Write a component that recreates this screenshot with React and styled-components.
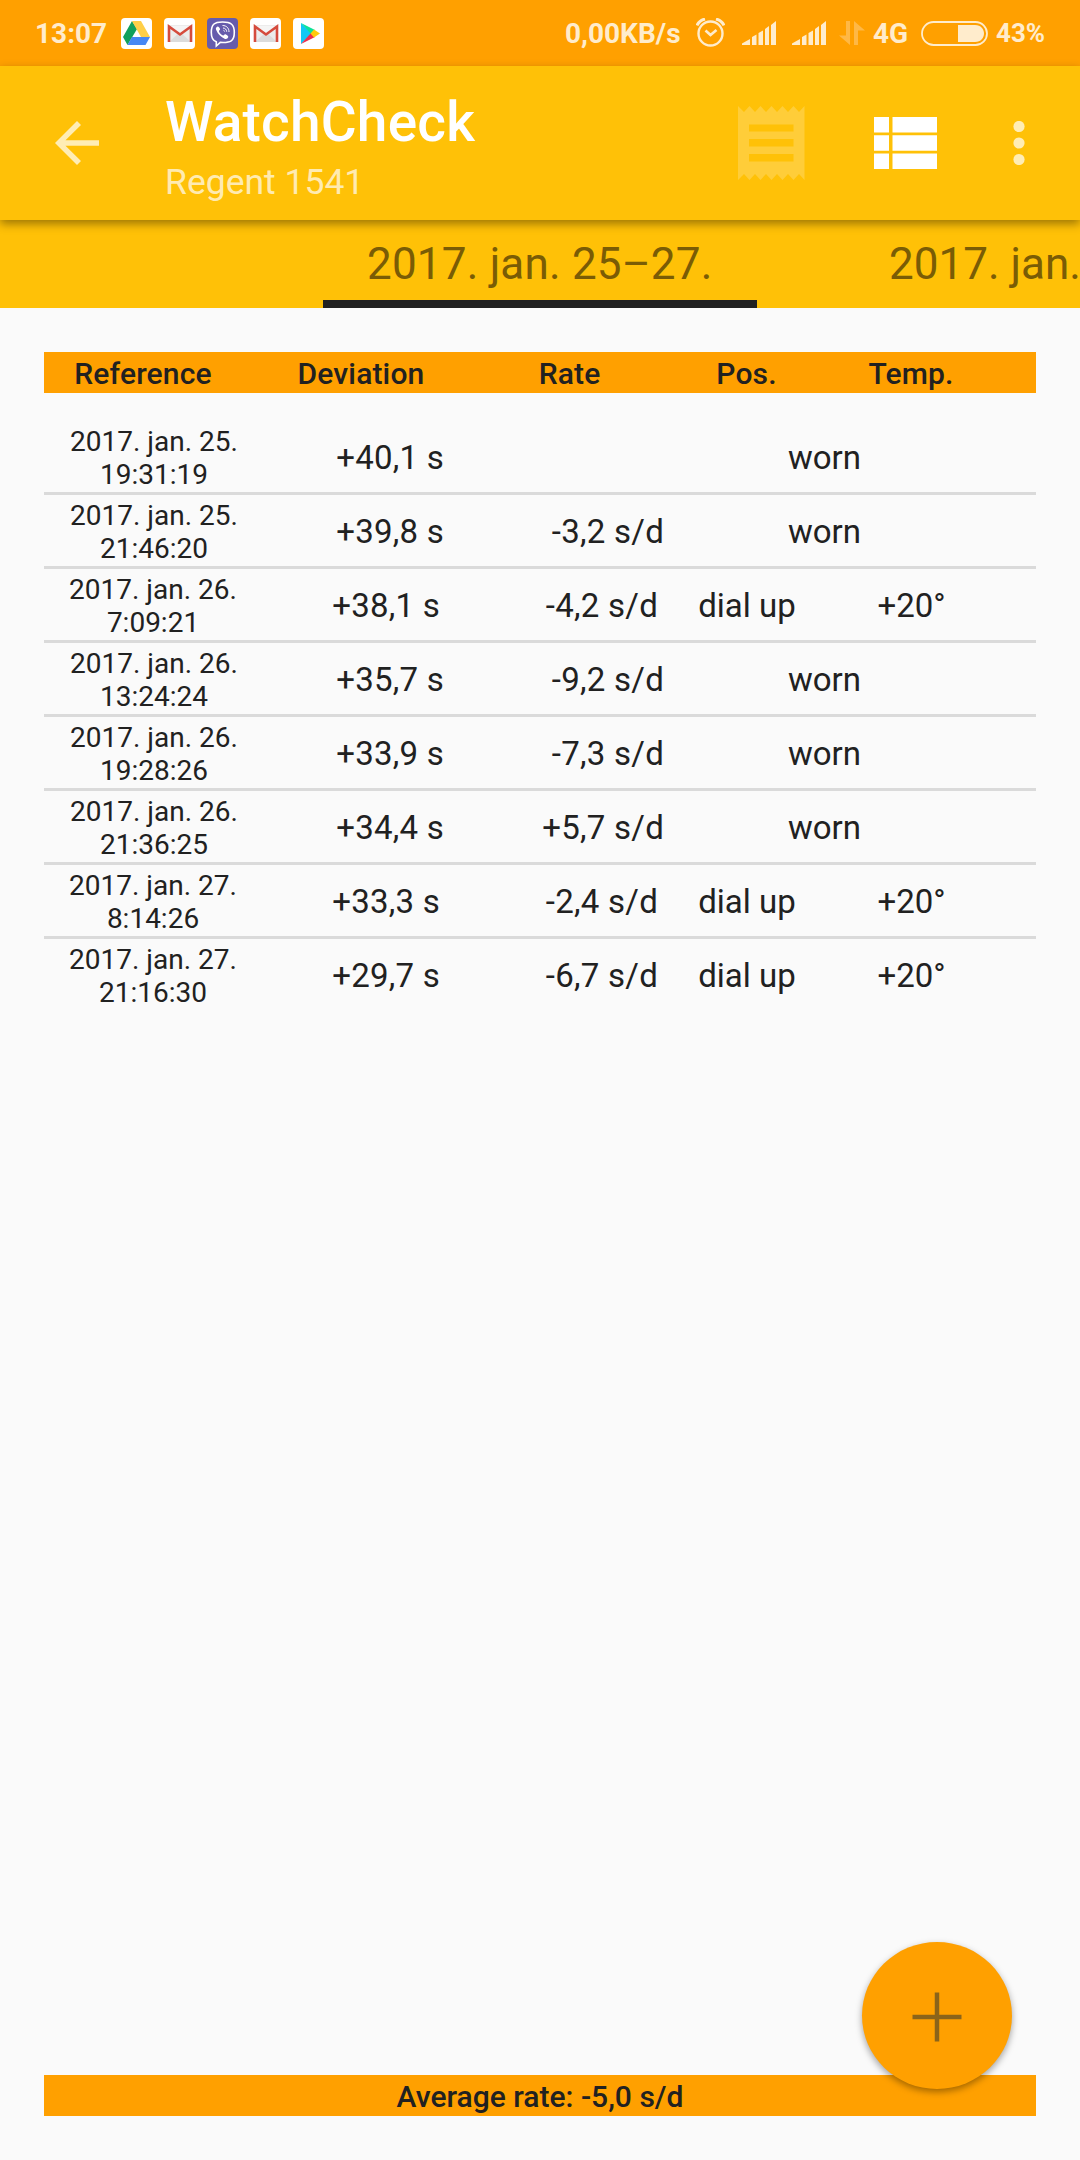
import React from "react"
import styled, { createGlobalStyle } from "styled-components"

const GlobalStyle = createGlobalStyle`
    * {
        box-sizing: border-box;
    }

    body {
        margin: 0;
        background: #fafafa;
        color: #212121;
        font-family: Roboto, "Noto Sans", sans-serif;
    }

    svg {
        display: block;
        flex: none;
    }
`

const Screen = styled.div`
    position: relative;
    display: flex;
    flex-direction: column;
    width: 1080px;
    height: 2160px;
    overflow: hidden;
`

const StatusBar = styled.header`
    display: flex;
    align-items: center;
    justify-content: space-between;
    height: 66px;
    padding: 0 35px;
    background: #ffa000;
    color: #ffeccc;
`

const StatusGroup = styled.div`
    display: flex;
    align-items: center;
`

const StatusText = styled.span`
    width: ${({ $width }) => $width}px;
    margin-right: ${({ $gap = 0 }) => $gap}px;
    padding-top: 1px;
    font-size: ${({ $size = 28 }) => $size}px;
    line-height: 33px;
    font-weight: ${({ $weight = 700 }) => $weight};
    white-space: nowrap;
`

const AppIcon = styled.svg`
    width: 31px;
    height: 31px;
    margin-right: 12px;
    border-radius: 4px;
    background: ${({ $bg = "#fff" }) => $bg};
`

const StatusIcon = styled.svg`
    margin-right: ${({ $gap }) => $gap}px;
`

const Toolbar = styled.div`
    position: relative;
    z-index: 1;
    display: flex;
    align-items: center;
    height: 154px;
    padding-left: 55px;
    background: #ffc107;
    color: #fff;
    box-shadow: 0 4px 9px rgba(0, 0, 0, 0.38);
`

const Titles = styled.div`
    flex: 1;
    padding: 14px 0 0 66px;
`

const Title = styled.h1`
    margin: 0;
    font-size: 55px;
    font-weight: 500;
    line-height: 64px;
    letter-spacing: 0.2px;
`

const Subtitle = styled.p`
    margin: 0;
    color: rgba(255, 255, 255, 0.7);
    font-size: 35.500px;
    line-height: 56px;
`

const Tabs = styled.nav`
    display: flex;
    height: 88px;
    padding-left: 323px;
    overflow: hidden;
    background: #ffc107;
`

const Tab = styled.div`
    flex: none;
    width: 434px;
    padding: 18px 0 0 ${({ $inset }) => $inset}px;
    border-bottom: 8px solid ${({ $active }) => ($active ? "#212121" : "transparent")};
    color: #7a5c05;
    font-size: 44px;
    line-height: 52px;
    letter-spacing: ${({ $active }) => ($active ? 0.2 : 0)}px;
    white-space: nowrap;
`

const Content = styled.main`
    display: flex;
    flex: 1;
    flex-direction: column;
    padding: 44px;
`

const HeaderRow = styled.div`
    display: grid;
    grid-template-columns: 198px 238px 179px 175px 154px;
    height: 41px;
    margin-bottom: 28px;
    background: #ffa000;
    font-size: 30px;
    font-weight: 500;
    line-height: 43px;
    letter-spacing: 0.15px;
    text-align: center;
`

const Row = styled.div`
    display: grid;
    grid-template-columns: ${({ $worn }) =>
        $worn ? "220px 180px 220px 321px" : "218px 178px 218px 178px 151px"};
    align-items: center;
    height: 74px;
    border-bottom: 3px solid #dadada;
    font-size: 33px;

    &:last-child {
        border-bottom-color: transparent;
    }
`

const Reference = styled.div`
    padding-top: 3px;
    font-size: 28px;
    line-height: 33px;
    text-align: center;
`

const Value = styled.div`
    padding-top: 1px;
    letter-spacing: ${({ $align }) => ($align ? 0 : 0.25)}px;
    text-align: ${({ $align = "right" }) => $align};
    white-space: nowrap;
`

const Average = styled.footer`
    height: 41px;
    margin-top: auto;
    background: #ffa000;
    font-size: 30px;
    font-weight: 500;
    line-height: 43px;
    text-align: center;
`

const AddButton = styled.button`
    position: absolute;
    right: 68px;
    bottom: 71px;
    display: flex;
    align-items: center;
    justify-content: center;
    width: 150px;
    height: 147px;
    padding: 3px 0 0;
    border: 0;
    border-radius: 50%;
    background: #ffa000;
    box-shadow: 0 3px 7px rgba(0, 0, 0, 0.36);
`

const measurements = [
    { date: "2017. jan. 25.", time: "19:31:19", deviation: "+40,1 s", rate: "", pos: "worn" },
    { date: "2017. jan. 25.", time: "21:46:20", deviation: "+39,8 s", rate: "-3,2 s/d", pos: "worn" },
    { date: "2017. jan. 26.", time: "7:09:21", deviation: "+38,1 s", rate: "-4,2 s/d", pos: "dial up", temp: "+20°" },
    { date: "2017. jan. 26.", time: "13:24:24", deviation: "+35,7 s", rate: "-9,2 s/d", pos: "worn" },
    { date: "2017. jan. 26.", time: "19:28:26", deviation: "+33,9 s", rate: "-7,3 s/d", pos: "worn" },
    { date: "2017. jan. 26.", time: "21:36:25", deviation: "+34,4 s", rate: "+5,7 s/d", pos: "worn" },
    { date: "2017. jan. 27.", time: "8:14:26", deviation: "+33,3 s", rate: "-2,4 s/d", pos: "dial up", temp: "+20°" },
    { date: "2017. jan. 27.", time: "21:16:30", deviation: "+29,7 s", rate: "-6,7 s/d", pos: "dial up", temp: "+20°" },
]

function DriveIcon() {
    return (
        <AppIcon viewBox="0 0 31 31">
            <path d="M11 3 2 19l4.500 8L16 11z" fill="#11a05d" />
            <path d="M11 3h9l9 16h-9z" fill="#ffcf48" />
            <path d="M11 19h18l-4.500 8h-18z" fill="#4687f4" />
        </AppIcon>
    )
}

function GmailIcon() {
    return (
        <AppIcon viewBox="0 0 31 31">
            <path d="M5 7h22v17H5z" fill="#ececec" />
            <path d="M5 24 16 14l11 10z" fill="#dcdcdc" />
            <path d="m6 8 10 8 10-8z" fill="#f5f5f5" />
            <path d="M5 24V8.500l11 8 11-8V24" fill="none" stroke="#d54b3d" strokeWidth="2.600" />
        </AppIcon>
    )
}

function ViberIcon() {
    return (
        <AppIcon viewBox="0 0 31 31" $bg="#665cac">
            <path
                d="M15.500 4C7 4 4.300 6.500 4.300 14.500c0 5 1.200 8 5 9.300V28l4-3.600c10.500.600 14-1.400 14-9.900C27.300 6.500 24 4 15.500 4z"
                fill="none"
                stroke="#fff"
                strokeWidth="1.600"
            />
            <path
                d="M10.500 8.500c-1.600 1-2 2-1.300 3.600 1.800 4.300 4.500 7 8.800 8.800 1.500.500 2.600-.200 3.300-1.800.300-.9-2.300-2.900-3.300-2.800-.9.200-1 1.400-2 1.100-2-.8-3.400-2.300-4-4-.3-1.100 1.100-1.200 1.100-2.200 0-.8-1.700-3-2.600-2.700z"
                fill="#fff"
            />
            <path d="M15.500 7.500c4 0 6.500 2.500 6.500 6.500M16 10c2.300.200 3.500 1.500 3.700 3.700M16.500 12.300c.8.200 1 .6 1.100 1.200" fill="none" stroke="#fff" strokeWidth="1" />
        </AppIcon>
    )
}

function PlayIcon() {
    return (
        <AppIcon viewBox="0 0 31 31">
            <path d="M8 5v21l11-10.500z" fill="#12c8f4" />
            <path d="m8 5 14 7-4 4z" fill="#0be29b" />
            <path d="m8 26 14-7-4-4z" fill="#ee2f4e" />
            <path d="m21 11.500 6 4-6 4-3.500-4z" fill="#ffcb0c" />
        </AppIcon>
    )
}

function AlarmIcon() {
    return (
        <StatusIcon $gap={17} width="29" height="30" viewBox="0 0 29 30" fill="none" stroke="currentColor">
            <circle cx="14.500" cy="15.500" r="12" strokeWidth="2.400" />
            <path d="m9.500 12.500 5 4.500 6-5" strokeWidth="2.600" />
            <path d="M1 7.500c1.500-3.500 4-5.500 8-6.500M28 7.500C26.500 4 24 2 20 1" strokeWidth="3" />
        </StatusIcon>
    )
}

function SignalIcon({ gap }) {
    return (
        <StatusIcon $gap={gap} width="34" height="24" viewBox="0 0 34 24" fill="currentColor">
            <path d="M0 24v-1.500L8 18v6zM10 24v-8l4.500-2.500V24zM16.500 24V12l4.500-2.500V24zM23 24V8l4-3v19zM29 24V4l5-4v24z" />
        </StatusIcon>
    )
}

function DataIcon() {
    return (
        <StatusIcon $gap={8} width="26" height="24" viewBox="0 0 26 24" fill="#ffb845">
            <path d="M7 0h4v24L0 14.500h7zM15 24V0l11 9.500h-7V24z" />
        </StatusIcon>
    )
}

function BatteryIcon() {
    return (
        <StatusIcon $gap={8} width="67" height="25" viewBox="0 0 67 25">
            <rect x="1" y="1" width="65" height="23" rx="11.500" fill="none" stroke="currentColor" strokeWidth="1.800" />
            <path d="M37 4h17c12 0 12 17 0 17H37z" fill="currentColor" />
        </StatusIcon>
    )
}

function ReceiptIcon() {
    return (
        <svg width="68" height="74" viewBox="0 0 68 74" fill="#ffcd39">
            <path
                fillRule="evenodd"
                d="M0 0 6 6l5.500-6L17 6l5.500-6L28 6l5.500-6L39 6l5.500-6L50 6l5.500-6L61 6l5.500-6v74l-5.500-6-5.500 6L50 68l-5.500 6L39 68l-5.500 6L28 68l-5.500 6L17 68l-5.500 6L6 68l-6 6zM11 18.500v7h44.500v-7zM11 33v7.500h44.500V33zM11 48v7.500h44.500V48z"
            />
        </svg>
    )
}

const ToolbarActions = styled.div`
    display: flex;
    align-items: center;
    padding: 0 55px 0 0;
    gap: 68px;
`

const ListIcon = styled.svg`
    margin-right: 7.500px;
`

function MeasurementRow({ item }) {
    return (
        <Row $worn={!item.temp}>
            <Reference>
                {item.date}
                <br />
                {item.time}
            </Reference>
            <Value>{item.deviation}</Value>
            <Value>{item.rate}</Value>
            <Value $align="center">{item.pos}</Value>
            {item.temp && <Value $align="center">{item.temp}</Value>}
        </Row>
    )
}

function App() {
    return (
        <>
            <GlobalStyle />
            <Screen>
                <StatusBar>
                    <StatusGroup>
                        <StatusText $width={86}>13:07</StatusText>
                        <DriveIcon />
                        <GmailIcon />
                        <ViberIcon />
                        <GmailIcon />
                        <PlayIcon />
                    </StatusGroup>
                    <StatusGroup>
                        <StatusText $width={114} $gap={17}>0,00KB/s</StatusText>
                        <AlarmIcon />
                        <SignalIcon gap={16} />
                        <SignalIcon gap={13} />
                        <DataIcon />
                        <StatusText $width={34} $gap={14}>4G</StatusText>
                        <BatteryIcon />
                        <StatusText $width={49} $weight={700} $size={26}>43%</StatusText>
                    </StatusGroup>
                </StatusBar>

                <Toolbar>
                    <svg width="44" height="44" viewBox="0 0 44 44" fill="rgba(255,255,255,.7)">
                        <path d="M44 19.250H10.500L26 3.900 22 0 0 22l22 22 4-3.900L10.500 24.750H44z" />
                    </svg>
                    <Titles>
                        <Title>WatchCheck</Title>
                        <Subtitle>Regent 1541</Subtitle>
                    </Titles>
                    <ToolbarActions>
                        <ReceiptIcon />
                        <ListIcon width="64" height="52" viewBox="0 0 64 52" fill="#fff">
                            <path d="M0 0h15v15.500H0zM18.500 0H63v15.500H18.500zM0 18.300h15v15.500H0zM18.500 18.300H63v15.500H18.500zM0 36.500h15V52H0zM18.500 36.500H63V52H18.500z" />
                        </ListIcon>
                        <svg width="12" height="44" viewBox="0 0 12 44" fill="rgba(255,255,255,.7)">
                            <circle cx="6" cy="5.500" r="5.600" />
                            <circle cx="6" cy="22" r="5.600" />
                            <circle cx="6" cy="38.500" r="5.600" />
                        </svg>
                    </ToolbarActions>
                </Toolbar>

                <Tabs>
                    <Tab $active $inset={44}>2017. jan. 25–27.</Tab>
                    <Tab $inset={132}>2017. jan.</Tab>
                </Tabs>

                <Content>
                    <HeaderRow>
                        <span>Reference</span>
                        <span>Deviation</span>
                        <span>Rate</span>
                        <span>Pos.</span>
                        <span>Temp.</span>
                    </HeaderRow>
                    <section>
                        {measurements.map((item) => (
                            <MeasurementRow key={item.date + item.time} item={item} />
                        ))}
                    </section>
                    <Average>Average rate: -5,0 s/d</Average>
                </Content>

                <AddButton aria-label="Add">
                    <svg width="50" height="50" viewBox="0 0 50 50" stroke="#8b641a" strokeWidth="4.500">
                        <path d="M25 .500v49M.500 25h49" />
                    </svg>
                </AddButton>
            </Screen>
        </>
    )
}

export default App
